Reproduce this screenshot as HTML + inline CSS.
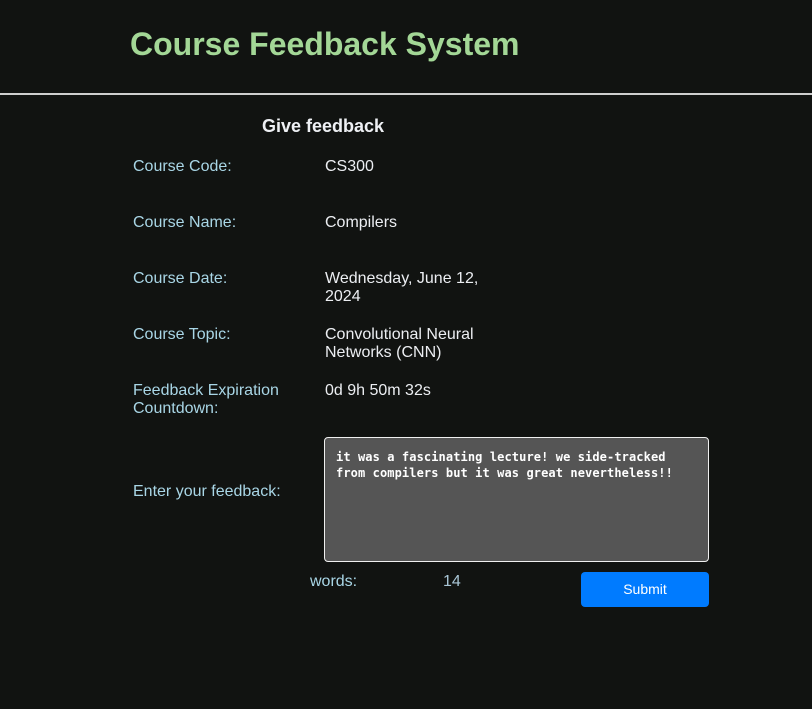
<!DOCTYPE html>
<html><head><meta charset="utf-8"><style>
body{margin:0;width:812px;height:709px;background:#111311;font-family:"Liberation Sans",sans-serif;position:relative;overflow:hidden}
.a{position:absolute;white-space:nowrap}
h1{position:absolute;left:130px;top:25px;margin:0;font-size:32px;font-weight:bold;color:#a3d796;line-height:38px}
.hr{position:absolute;left:0;top:93px;width:812px;height:2px;background:#cfcfcf}
.l{position:absolute;left:133px;color:#a9d6e6;font-size:16px;line-height:18px}
.v{position:absolute;left:325px;color:#eceef2;font-size:16px;line-height:18px;width:180px}
.ta{position:absolute;left:324px;top:437px;width:383px;height:123px;background:#555;border:1px solid #f0f0f0;border-radius:4px;box-sizing:content-box}
.tt{position:absolute;left:11px;top:11px;font-family:"DejaVu Sans Mono","Liberation Mono",monospace;font-size:12px;font-weight:bold;color:#fff;line-height:16px;white-space:pre;letter-spacing:0.1px}
.btn{position:absolute;left:581px;top:572px;width:128px;height:35px;background:#007bff;border-radius:4px;color:#fff;font-size:14px;text-align:center;line-height:35px}
</style></head><body>
<h1>Course Feedback System</h1>
<div class="hr"></div>
<div class="a" style="left:262px;top:116px;font-size:18px;font-weight:bold;color:#eef0f4">Give feedback</div>
<div class="l" style="top:158px">Course Code:</div><div class="v" style="top:158px">CS300</div>
<div class="l" style="top:214px">Course Name:</div><div class="v" style="top:214px">Compilers</div>
<div class="l" style="top:270px">Course Date:</div><div class="v" style="top:270px">Wednesday, June 12,<br>2024</div>
<div class="l" style="top:326px">Course Topic:</div><div class="v" style="top:326px">Convolutional Neural<br>Networks (CNN)</div>
<div class="l" style="top:382px">Feedback Expiration<br>Countdown:</div><div class="v" style="top:382px">0d 9h 50m 32s</div>
<div class="l" style="top:483px">Enter your feedback:</div>
<div class="ta"><div class="tt">it was a fascinating lecture! we side-tracked
from compilers but it was great nevertheless!!</div></div>
<div class="a" style="left:310px;top:573px;font-size:16px;color:#a9d6e6">words:</div>
<div class="a" style="left:443px;top:573px;font-size:16px;color:#a9c6d6">14</div>
<div class="btn">Submit</div>
</body></html>
